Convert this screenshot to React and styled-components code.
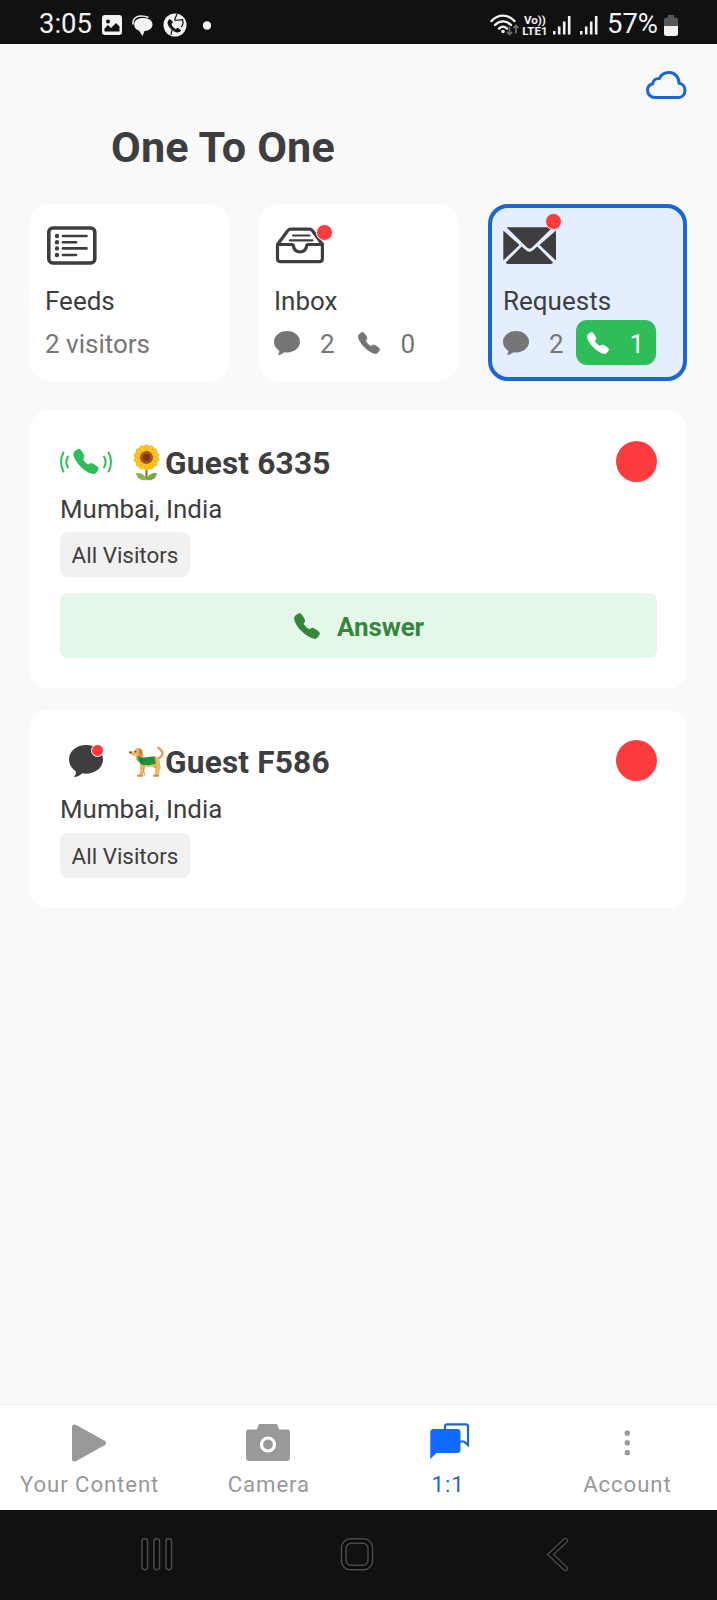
import React from 'react'
import styled, { createGlobalStyle } from 'styled-components'
import { IoCall } from 'react-icons/io5'

const Colors = {
    bar: '#111111',
    page: '#f9f9f9',
    white: '#ffffff',
    text: '#3e3e40',
    gray: '#757575',
    tabGray: '#999999',
    chip: '#f1f1f1',
    red: '#fb3b3d',
    green: '#2ebd58',
    darkGreen: '#37863b',
    lightGreen: '#e4f8ea',
    blue: '#1b66d2',
    tabBlue: '#0f6bff',
    lightBlue: '#e4eefe',
}

const GlobalStyle = createGlobalStyle`
    * {
        box-sizing: border-box;
    }
    body {
        margin: 0;
        background-color: ${Colors.page};
        font-family: Roboto, 'Liberation Sans', sans-serif;
        color: ${Colors.text};
    }
    svg {
        display: block;
        flex: none;
    }
`;

const Screen = styled.div`
    display: flex;
    flex-direction: column;
    width: 717px;
    height: 1600px;
    overflow: hidden;
    background-color: ${Colors.page};
`;

/* status bar */

const StatusBar = styled.div`
    display: flex;
    justify-content: space-between;
    height: 44px;
    padding: 6px 39px 0 39px;
    color: #f2f2f2;
    background-color: ${Colors.bar};
`;

const StatusGroup = styled.div`
    display: flex;
    align-items: center;
    height: 38px;
    gap: ${props => props.$gap}px;
`;

const SignalGroup = styled(StatusGroup)`
    margin: 0 5px 0 5px;
`;

const StatusText = styled.span`
    padding-bottom: 2px;
    font-size: 27.5px;
    line-height: 36px;
`;

const VolteLabel = styled.div`
    display: flex;
    flex-direction: column;
    align-items: center;
    width: 26px;
    margin-right: -1px;
    padding-top: 2px;
    font-size: 11.5px;
    font-weight: 700;
    line-height: 11px;
    white-space: nowrap;
`;

/* header */

const Header = styled.header`
    display: flex;
    flex-direction: column;
    height: 160px;
    padding: 26px 30px 0 111px;
`;

const CloudButton = styled.div`
    align-self: flex-end;
    height: 30px;
`;

const Title = styled.h1`
    margin: 22px 0 0 0;
    font-size: 43.2px;
    font-weight: 700;
    line-height: 52px;
    letter-spacing: .15px;
`;

/* stat cards */

const StatGrid = styled.div`
    display: grid;
    grid-template-columns: repeat(3, 199px);
    gap: 30px;
    padding: 0 30px;
`;

const StatCard = styled.div`
    height: 177px;
    padding: 15px 0 0 11px;
    border: 4px solid ${props => (props.$active ? Colors.blue : Colors.white)};
    border-radius: 20px;
    background-color: ${props => (props.$active ? Colors.lightBlue : Colors.white)};
`;

const StatIcon = styled.div`
    position: relative;
    width: 56px;
    height: 44px;
    margin-left: ${props => props.$left || 0}px;
`;

const StatName = styled.div`
    margin: 19px 0 4px 0;
    font-size: 26px;
    line-height: 30px;
`;

const StatRow = styled.div`
    display: flex;
    align-items: center;
    height: 45px;
    color: ${Colors.gray};
`;

const StatText = styled.span`
    padding-top: 2px;
    font-size: 26px;
    line-height: 30px;
`;

const Count = styled(StatText)`
    width: 15px;
    margin-left: ${props => props.$left}px;
`;

const PhoneCount = styled.div`
    display: flex;
    align-items: center;
    height: 45px;
    width: 80px;
    margin-left: 12px;
    padding-left: 10px;
    border-radius: 11px;
    color: ${props => (props.$active ? Colors.white : Colors.gray)};
    background-color: ${props => (props.$active ? Colors.green : 'transparent')};
`;

const AlertDot = styled.span`
    position: absolute;
    top: ${props => props.$top}px;
    left: ${props => props.$left}px;
    width: ${props => props.$size}px;
    height: ${props => props.$size}px;
    border: ${props => props.$ring || 1}px solid ${props => props.$ringColor || Colors.white};
    border-radius: 50%;
    background-color: ${Colors.red};
`;

/* guest list */

const GuestList = styled.main`
    display: flex;
    flex: 1;
    flex-direction: column;
    gap: 22px;
    padding: 30px 30px 0 30px;
`;

const GuestCard = styled.section`
    padding: 30px 30px;
    border-radius: 18px;
    background-color: ${Colors.white};
`;

const GuestHead = styled.div`
    display: flex;
    align-items: center;
    height: 41px;
`;

const GuestKind = styled.div`
    position: relative;
    width: 54px;
    margin-right: 14px;
`;

const GuestEmoji = styled.div`
    width: 37px;
`;

const GuestName = styled.span`
    flex: 1;
    padding-top: 4px;
    font-size: 31.7px;
    font-weight: 700;
    line-height: 38px;
    letter-spacing: .15px;
`;

const RedCircle = styled.span`
    width: 41px;
    height: 41px;
    border-radius: 50%;
    background-color: ${Colors.red};
`;

const GuestPlace = styled.div`
    margin-top: ${props => props.$top}px;
    font-size: 25.9px;
    line-height: 30px;
`;

const Chip = styled.div`
    width: 130px;
    height: 45px;
    margin-top: ${props => props.$top}px;
    border-radius: 8px;
    font-size: 22.4px;
    line-height: 47px;
    text-align: center;
    background-color: ${Colors.chip};
`;

const AnswerButton = styled.div`
    display: flex;
    justify-content: center;
    align-items: center;
    gap: 16px;
    height: 65px;
    margin-top: 16px;
    border-radius: 8px;
    color: ${Colors.darkGreen};
    font-size: 26px;
    font-weight: 700;
    background-color: ${Colors.lightGreen};
    & > span {
        padding-top: 2px;
        letter-spacing: -.1px;
    }
`;

/* bottom tabs */

const TabBar = styled.nav`
    display: grid;
    grid-template-columns: repeat(4, 1fr);
    height: 106px;
    border-top: 1px solid #efefef;
    background-color: ${Colors.white};
`;

const Tab = styled.div`
    display: flex;
    flex-direction: column;
    align-items: center;
    padding-top: 16px;
    color: ${props => (props.$active ? Colors.tabBlue : Colors.tabGray)};
`;

const TabLabel = styled.span`
    margin-top: 5px;
    font-size: 22.2px;
    line-height: 28px;
    letter-spacing: .9px;
    white-space: nowrap;
    color: ${props => (props.$active ? Colors.blue : 'inherit')};
`;

const SystemBar = styled.div`
    display: flex;
    gap: 164px;
    height: 90px;
    padding: 26px 0 0 139px;
    background-color: ${Colors.bar};
`;

/* icons */

const ImageIcon = () => (
    <svg width="20" height="20" viewBox="0 0 20 20">
        <rect width="20" height="20" rx="3" fill="#f2f2f2" />
        <circle cx="6" cy="6.500" r="2" fill={Colors.bar} />
        <path d="M2.500 16.500v-3L6 10l3 3 5-5 3.500 3.500v5z" fill={Colors.bar} />
    </svg>
)

const BubblesIcon = () => (
    <svg width="21" height="21" viewBox="0 0 21 21">
        <path d="M1.200 9.500C0 4 4 1 9 1c3.500 0 5.500.5 7.500 1.500" fill="none" stroke="#f2f2f2" strokeWidth="1.500" />
        <path d="M11 3c5.800 0 9.500 2.400 9.500 6.600 0 3.900-3.500 6.200-8 6.500l-2 5-3.600-5.500c-3-.8-4.700-2.900-4.700-6C2.200 5.400 5.500 3 11 3z" fill="#f2f2f2" />
    </svg>
)

const GlobePhoneIcon = () => (
    <svg width="24" height="24" viewBox="0 0 24 24">
        <circle cx="12" cy="12" r="11.500" fill="#f2f2f2" />
        <path d="M6.800 6C3 8.500 4.500 12.500 8 16s7.800 4.800 10.200 1.500l-3.200-2.700-2.300 1.200C10.500 15 9 13 8.500 11l1.800-2z" fill={Colors.bar} />
        <path d="M14 1l-2.500 6M11.500 7.500l8-.8c1 2.500.2 5.500-1.300 7.500M9 17l-1 5" fill="none" stroke={Colors.bar} strokeWidth="1.200" />
    </svg>
)

const DotIcon = () => (
    <svg width="14" height="9" viewBox="0 0 14 9">
        <circle cx="10" cy="4.500" r="4.200" fill="#f2f2f2" />
    </svg>
)

const WifiIcon = () => (
    <svg width="31" height="24" viewBox="0 0 31 24">
        <g fill="none" stroke="#f2f2f2" strokeWidth="2.400" strokeLinecap="round">
            <path d="M1.500 8C8 .8 18 .8 24.500 8" />
            <path d="M5 12c4.800-4.800 11.200-4.800 16 0" />
            <path d="M9 15.700c2.600-2.400 5.400-2.400 8 0" />
        </g>
        <circle cx="13" cy="18.500" r="1.800" fill="#f2f2f2" />
        <path d="M19.500 13.500v8M17 19l2.500 2.500L22 19M26 20.500v-8M23.500 15l2.500-2.500 2.500 2.500" fill="none" stroke="#6a6a6a" strokeWidth="1.800" />
    </svg>
)

const SignalIcon = () => (
    <svg width="18" height="20" viewBox="0 0 18 20">
        {[[1, 16], [6, 11.5], [11, 6.5], [16, 1]].map(([x, y]) => (
            <path key={x} d={`M${x + 0.2} ${y}V19.500`} stroke="#f2f2f2" strokeWidth="2.600" />
        ))}
    </svg>
)

const BatteryIcon = () => (
    <svg width="14" height="21" viewBox="0 0 14 21">
        <path d="M4 0h6v2.500h1.500A2.500 2.500 0 0 1 14 5v6H0V5a2.500 2.500 0 0 1 2.500-2.500H4z" fill="#575757" />
        <path d="M0 11h14v7.500a2.500 2.500 0 0 1-2.500 2.500h-9A2.500 2.500 0 0 1 0 18.500z" fill="#f2f2f2" />
    </svg>
)

const CloudIcon = () => (
    <svg width="42" height="30" viewBox="0 0 42 30">
        <path
            d="M10 27.500h23.500c4 0 6.500-3.300 6.500-7 0-4-2.500-6.800-6-7.300C34 6.500 29.500 2.500 24 2.500c-4.500 0-8 2.300-9.700 6-3.500-.4-6.100 1.800-6.500 5.200C4.500 14.500 2.500 17 2.500 20.300c0 4 3.200 7.200 7.500 7.200z"
            fill="none"
            stroke={Colors.blue}
            strokeWidth="3"
            strokeLinejoin="round"
        />
    </svg>
)

const FeedsIcon = () => (
    <svg width="52" height="44" viewBox="0 0 52 44">
        <rect x="1.800" y="5" width="46" height="35" rx="4" fill="none" stroke={Colors.text} strokeWidth="3.600" />
        {[13, 19.2, 25.4, 32].map((y, i) => (
            <g key={y}>
                <circle cx="10" cy={y} r="2.200" fill={Colors.text} />
                <path d={`M16 ${y}H${i % 2 ? 29 : 39.5}`} stroke={Colors.text} strokeWidth="2.600" strokeLinecap="round" />
            </g>
        ))}
    </svg>
)

const InboxIcon = () => (
    <svg width="52" height="44" viewBox="0 0 52 44">
        <g fill="none" stroke={Colors.text} strokeWidth="3.200" strokeLinejoin="round" strokeLinecap="round">
            <path d="M2.500 22v13.500c0 2 1.200 3.200 3.200 3.200h38.500c2 0 3.200-1.200 3.200-3.200V22" />
            <path d="M2.500 21.500h14.500c1.500 0 1.200 1 1.500 2.200.8 3.200 3.200 5.300 6.500 5.300s5.700-2.100 6.500-5.300c.3-1.200 0-2.200 1.500-2.200h14.500" />
            <path d="M2.500 21.500L12.500 8c.8-1.300 1.700-1.800 3-1.800h19c1.500 0 2.500.6 3.200 1.800l9.800 13.500" />
            <path d="M18 12.500h16.500M15 17.300h22.500" strokeWidth="2.200" />
        </g>
    </svg>
)

const MailIcon = () => (
    <svg width="54" height="44" viewBox="0 0 54 44">
        <path d="M.3 7.500L16.500 22 .3 37.500z" fill={Colors.text} />
        <path d="M53 7.500L36.500 22 53 37.500z" fill={Colors.text} />
        <path d="M3.500 4.300h46.200L29 24.500c-1.700 1.500-3.300 1.500-5 0z" fill={Colors.text} />
        <path d="M18.700 23.500l4 3.600c2.600 2.200 5 2.200 7.600 0l4-3.600L50 39.500c-.8 1-1.700 1.500-2.800 1.500H5.500c-1.100 0-2-.5-2.700-1.500z" fill={Colors.text} />
    </svg>
)

const CommentIcon = ({ width, height, color }) => (
    <svg width={width} height={height} viewBox="0 0 25 24" preserveAspectRatio="none">
        <path
            d="M12.500 0C19.500 0 25 4.800 25 10.800s-5.500 10.700-12.500 10.700c-1 0-1.900-.1-2.700-.3C8 22.800 6 24 3.600 24c1.100-1.400 1.600-2.700 1.400-4.300C2 17.800 0 14.500 0 10.800 0 4.800 5.500 0 12.500 0z"
            fill={color}
        />
    </svg>
)

const RingingIcon = () => (
    <svg width="54" height="34" viewBox="0 0 54 34">
        <g fill="none" stroke={Colors.green} strokeWidth="2" strokeLinecap="round">
            <path d="M3.500 7.500C.2 13 .2 21 3.500 26.500M8 11.500c-2.200 3.500-2.200 7.500 0 11" />
            <path d="M48.500 7.500c3.300 5.500 3.300 13.500 0 19M44 11.500c2.200 3.500 2.200 7.500 0 11" />
        </g>
        <IoCall x="12.500" y="3" size="27" color={Colors.green} strokeWidth="28" />
    </svg>
)

const petals = Array.from({ length: 14 }, (_, i) => (i * 360) / 14)

const SunflowerIcon = () => (
    <svg width="37" height="38" viewBox="0 0 37 38">
        <path d="M18.500 24v12" stroke="#5d8f2e" strokeWidth="2.200" />
        <path d="M18.500 37c-5 1-9.500-1-10.500-7 5-.5 9.500 1.500 10.500 7z" fill="#8cb552" />
        <path d="M18.500 37c5 1 9.500-1 10.500-7-5-.5-9.500 1.500-10.500 7z" fill="#79a544" />
        {petals.map(a => (
            <ellipse key={a} cx="18.500" cy="6.300" rx="2.700" ry="4.600" fill="#fcc821" stroke="#f0a30d" strokeWidth=".6" transform={`rotate(${a} 18.500 14.500)`} />
        ))}
        <circle cx="18.500" cy="14.500" r="6.500" fill="#a2541a" />
        <circle cx="18.500" cy="14.500" r="3.600" fill="#7a3310" />
    </svg>
)

const DogIcon = () => (
    <svg width="36" height="36" viewBox="0 0 38 36">
        <path d="M32 15c4-1 5.500-4.500 3.500-7.500-.9-1.400-2.200-2.500-3.500-3.500" fill="none" stroke="#dfa25a" strokeWidth="2.600" strokeLinecap="round" />
        <path d="M12.500 20l.5 8-1.500 5h4l2.500-9 8 0 3 2.500-1 6.500h4l2.500-8-1.500-10-4-2z" fill="#f0b566" />
        <path d="M17 23l-.5 6 1.500 4.500M27 22l4 4" stroke="#d08f43" fill="none" />
        <path d="M2 8.500l4.500-1L9 4.500c3-1.500 6.500.5 6.500 4l1 4.500-3 7-5-3-.5-4.500-4-.5C2.500 11.500 1.700 10 2 8.500z" fill="#f0b566" />
        <path d="M11.500 5.500c3-.8 4.500 3 3 7.500-2.500 0-3.500-3-3-7.500z" fill="#c78234" />
        <circle cx="2.500" cy="8.800" r="1.200" fill="#4b3a2f" />
        <circle cx="8" cy="8" r=".9" fill="#4b3a2f" />
        <path d="M10 12l5 2.500 13-1.500 1.500 8-8 1.500-7-.5-4-4.500z" fill="#22913e" />
        <path d="M15 14.500l-1 6" stroke="#136f2b" fill="none" />
        <path d="M10.500 33.500h4.500M27.500 33.500h4.500" stroke="#d08f43" strokeWidth="2" strokeLinecap="round" />
    </svg>
)

const PlayIcon = () => (
    <svg width="42" height="44" viewBox="0 0 42 44">
        <path d="M5.500 6v32L34.500 22z" fill="currentColor" stroke="currentColor" strokeWidth="5" strokeLinejoin="round" />
    </svg>
)

const CameraIcon = () => (
    <svg width="46" height="44" viewBox="0 0 46 44">
        <path d="M14 3h16c1 0 1.500.5 1.800 1.500L33 8.500h8a3 3 0 0 1 3 3v25.500a3 3 0 0 1-3 3H3a3 3 0 0 1-3-3V11.500a3 3 0 0 1 3-3h8l1.200-4c.3-1 .8-1.500 1.800-1.500z" fill="currentColor" />
        <circle cx="22" cy="23.500" r="6.500" fill="none" stroke="#fff" strokeWidth="3.200" />
    </svg>
)

const ChatsIcon = () => (
    <svg width="37" height="44" viewBox="0 0 37 44" overflow="visible">
        <path d="M15 9V5.500c0-1.500.7-2.200 2.200-2.200h18.600c1.500 0 2.200.7 2.200 2.200V24l-4-3.500h-4" fill="none" stroke={Colors.blue} strokeWidth="2.200" />
        <path d="M3 8h24.500a3 3 0 0 1 3 3v18a3 3 0 0 1-3 3H6.500L.3 38V11a3 3 0 0 1 2.700-3z" fill="currentColor" />
    </svg>
)

const DotsIcon = () => (
    <svg width="44" height="44" viewBox="0 0 44 44">
        {[9.5, 19.3, 29].map(y => (
            <rect key={y} x="19.700" y={y} width="5.200" height="5.200" rx="1.800" fill="currentColor" />
        ))}
    </svg>
)

const RecentsIcon = () => (
    <svg width="36" height="37" viewBox="0 0 36 37" fill="#0b0b0b" stroke="#4a4a4a" strokeWidth="1.500">
        <rect x="3" y="2.800" width="5.500" height="31" rx="2.700" />
        <rect x="15" y="2.800" width="5.500" height="31" rx="2.700" />
        <rect x="27" y="2.800" width="5.500" height="31" rx="2.700" />
    </svg>
)

const HomeIcon = () => (
    <svg width="36" height="37" viewBox="0 0 36 37" fill="none" stroke="#4a4a4a" strokeWidth="1.500">
        <rect x="2.500" y="2.800" width="31" height="31" rx="9" fill="#0b0b0b" />
        <rect x="7" y="7.300" width="22" height="22" rx="5" fill={Colors.bar} />
    </svg>
)

const BackIcon = () => (
    <svg width="36" height="37" viewBox="0 0 36 37" fill="none" strokeLinecap="round" strokeLinejoin="miter">
        <path d="M26.500 4.500L11.500 18.500 26.500 32.500" stroke="#4a4a4a" strokeWidth="5.400" />
        <path d="M26.500 4.500L11.500 18.500 26.500 32.500" stroke="#0b0b0b" strokeWidth="2.600" />
    </svg>
)

const tabs = [
    { label: 'Your Content', Icon: PlayIcon },
    { label: 'Camera', Icon: CameraIcon },
    { label: '1:1', Icon: ChatsIcon, active: true },
    { label: 'Account', Icon: DotsIcon },
]

const Counts = ({ chats, calls, active }) => (
    <StatRow>
        <CommentIcon width={26} height={24} color={Colors.gray} />
        <Count $left={20}>{chats}</Count>
        <PhoneCount $active={active}>
            <IoCall size={24} strokeWidth="20" />
            <Count $left={19.5}>{calls}</Count>
        </PhoneCount>
    </StatRow>
)

const App = () => (
    <Screen>
        <GlobalStyle />
        <StatusBar>
            <StatusGroup $gap={10}>
                <StatusText>3:05</StatusText>
                <ImageIcon />
                <BubblesIcon />
                <GlobePhoneIcon />
                <DotIcon />
            </StatusGroup>
            <StatusGroup $gap={1}>
                <WifiIcon />
                <VolteLabel>
                    <span>Vo))</span>
                    <span>LTE1</span>
                </VolteLabel>
                <SignalGroup $gap={9}>
                    <SignalIcon />
                    <SignalIcon />
                    <StatusText>57%</StatusText>
                </SignalGroup>
                <BatteryIcon />
            </StatusGroup>
        </StatusBar>

        <Header>
            <CloudButton>
                <CloudIcon />
            </CloudButton>
            <Title>One To One</Title>
        </Header>

        <StatGrid>
            <StatCard>
                <StatIcon $left={1.5}>
                    <FeedsIcon />
                </StatIcon>
                <StatName>Feeds</StatName>
                <StatRow>
                    <StatText>2 visitors</StatText>
                </StatRow>
            </StatCard>
            <StatCard>
                <StatIcon $left={1}>
                    <InboxIcon />
                    <AlertDot $top={1} $left={41} $size={17} />
                </StatIcon>
                <StatName>Inbox</StatName>
                <Counts chats={2} calls={0} />
            </StatCard>
            <StatCard $active>
                <StatIcon>
                    <MailIcon />
                    <AlertDot $top={-10} $left={42} $size={17} $ringColor={Colors.lightBlue} />
                </StatIcon>
                <StatName>Requests</StatName>
                <Counts chats={2} calls={1} active />
            </StatCard>
        </StatGrid>

        <GuestList>
            <GuestCard>
                <GuestHead>
                    <GuestKind>
                        <RingingIcon />
                    </GuestKind>
                    <GuestEmoji>
                        <SunflowerIcon />
                    </GuestEmoji>
                    <GuestName>Guest 6335</GuestName>
                    <RedCircle />
                </GuestHead>
                <GuestPlace $top={12}>Mumbai, India</GuestPlace>
                <Chip $top={8}>All Visitors</Chip>
                <AnswerButton>
                    <IoCall size={28} strokeWidth="20" />
                    <span>Answer</span>
                </AnswerButton>
            </GuestCard>
            <GuestCard>
                <GuestHead>
                    <GuestKind>
                        <svg width="54" height="34" viewBox="0 0 54 34">
                            <g transform="translate(9 1)">
                                <CommentIcon width={34} height={32} color={Colors.text} />
                            </g>
                        </svg>
                        <AlertDot $top={0} $left={31} $size={13} $ring={1.5} />
                    </GuestKind>
                    <GuestEmoji>
                        <DogIcon />
                    </GuestEmoji>
                    <GuestName>Guest F586</GuestName>
                    <RedCircle />
                </GuestHead>
                <GuestPlace $top={13}>Mumbai, India</GuestPlace>
                <Chip $top={9}>All Visitors</Chip>
            </GuestCard>
        </GuestList>

        <TabBar>
            {tabs.map(({ label, Icon, active }) => (
                <Tab key={label} $active={active}>
                    <Icon />
                    <TabLabel $active={active}>{label}</TabLabel>
                </Tab>
            ))}
        </TabBar>
        <SystemBar>
            <RecentsIcon />
            <HomeIcon />
            <BackIcon />
        </SystemBar>
    </Screen>
)

export default App
